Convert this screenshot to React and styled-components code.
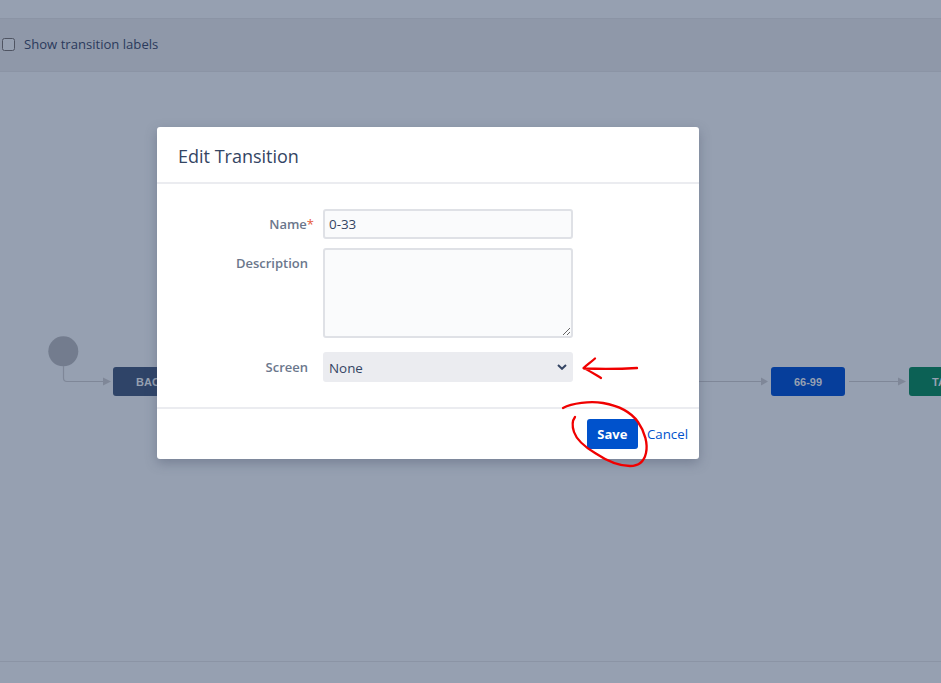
import React from "react";
import styled, { createGlobalStyle } from "styled-components";

const Global = createGlobalStyle`
  html, body { margin: 0; padding: 0; }
  body { font-family: "Open Sans", "Noto Sans", "Liberation Sans", sans-serif; background: #96a0b1; }
  * { box-sizing: border-box; }
`;

const Page = styled.div`
  position: relative;
  width: 941px;
  height: 683px;
  overflow: hidden;
  display: flex;
  flex-direction: column;
  background: #96a0b1;
`;
const TopStrip = styled.div`
  height: 19px;
  flex: none;
  border-bottom: 1px solid #8b94a5;
`;
const Toolbar = styled.label`
  height: 53px;
  flex: none;
  display: flex;
  align-items: center;
  gap: 9px;
  padding: 0 0 2px 2px;
  background: #8f98a9;
  border-bottom: 1px solid #8b94a5;
  font-size: 13.1px;
  color: #2b3a5c;
`;
const Check = styled.input`
  appearance: none;
  width: 13px;
  height: 13px;
  margin: 0;
  background: #96a0b1;
  border: 1px solid #4f5462;
  border-radius: 2.5px;
`;
const Canvas = styled.div`
  position: relative;
  flex: 1;
`;
const Footer = styled.div`
  height: 22px;
  flex: none;
  border-top: 1px solid #8b94a5;
`;
const Diagram = styled.svg`
  position: absolute;
  left: 0;
  top: 0;
`;
const Node = styled.div`
  position: absolute;
  top: 295px;
  height: 29px;
  left: ${(p) => p.$x}px;
  width: ${(p) => p.$w}px;
  background: ${(p) => p.$bg};
  border-radius: 3px;
  display: flex;
  align-items: center;
  justify-content: center;
  white-space: nowrap;
  font-family: "Liberation Sans", Arial, sans-serif;
  font-weight: 700;
  font-size: 11px;
  color: #96a0b1;
`;
const Dialog = styled.div`
  position: absolute;
  left: 157px;
  top: 127px;
  width: 542px;
  height: 332px;
  background: #fff;
  border-radius: 3px;
  box-shadow: 0 4px 12px rgba(60, 70, 95, 0.35);
  display: flex;
  flex-direction: column;
`;
const Header = styled.header`
  height: 57px;
  flex: none;
  display: flex;
  align-items: center;
  padding: 2px 21px 0;
  border-bottom: 2px solid #ebecf0;
`;
const Title = styled.h2`
  margin: 0;
  font-size: 18px;
  font-weight: 400;
  color: #344563;
`;
const Body = styled.div`
  flex: 1;
  display: grid;
  grid-template-columns: 151px 250px;
  column-gap: 15px;
  align-content: start;
  padding-top: 25px;
  row-gap: 9px;
`;
const Label = styled.label`
  text-align: right;
  font-size: 13px;
  font-weight: 600;
  color: #6b778c;
  line-height: 30px;
  height: 30px;
  margin-top: ${(p) => p.$mt || 0}px;
`;
const Star = styled.span`
  display: inline-block;
  margin-right: -6px;
  font-weight: 400;
  color: #e5573a;
`;
const fieldBase = `
  display: block;
  width: 250px;
  border: 2px solid #dfe1e6;
  border-radius: 3px;
  background: #fafbfc;
  font-family: inherit;
  font-size: 13.4px;
  color: #344563;
  margin: 0;
  outline: none;
`;
const TextInput = styled.input`
  ${fieldBase}
  height: 30px;
  padding: 0 4px;
`;
const TextArea = styled.textarea`
  ${fieldBase}
  height: 90px;
  padding: 4px;
  resize: both;
`;
const SelectWrap = styled.div`
  position: relative;
  width: 250px;
  height: 30px;
  margin-top: 5px;
`;
const Select = styled.select`
  ${fieldBase}
  appearance: none;
  height: 30px;
  padding: 2px 4px 0;
  border-color: #ebecf0;
  background: #ebecf0;
`;
const Chevron = styled.svg`
  position: absolute;
  right: 6px;
  top: 12px;
  pointer-events: none;
`;
const DialogFooter = styled.footer`
  height: 52px;
  flex: none;
  display: flex;
  align-items: center;
  justify-content: flex-end;
  gap: 9px;
  padding-right: 11px;
  border-top: 2px solid #ebecf0;
`;
const SaveButton = styled.button`
  width: 51px;
  height: 30px;
  border: 0;
  border-radius: 3px;
  background: #0052cc;
  color: #fff;
  font-family: inherit;
  font-weight: 700;
  font-size: 13px;
  padding: 0;
`;
const CancelLink = styled.a`
  color: #0052cc;
  font-size: 13.3px;
  text-decoration: none;
`;
const Ink = styled.svg`
  position: absolute;
  left: 0;
  top: 0;
  pointer-events: none;
`;

export default function App() {
  return (
    <Page>
      <Global />
      <TopStrip />
      <Toolbar>
        <Check type="checkbox" />
        Show transition labels
      </Toolbar>
      <Canvas>
        <Diagram width="941" height="590" viewBox="0 72 941 590">
          <circle cx="63.300" cy="351.300" r="15" fill="#737c8e" />
          <g fill="none" stroke="#7f8798" strokeWidth="1.2">
            <path d="M63.500 366V378Q63.500 381.500 67 381.500H104" />
            <path d="M699 381.500H762" />
            <path d="M849 381.500H900" />
          </g>
          <g fill="#7f8798">
            <path d="M103 377.500L111 381.500L103 385.500Z" />
            <path d="M761 377.500L768 381.500L761 385.500Z" />
            <path d="M898 377.500L906 381.500L898 385.500Z" />
          </g>
        </Diagram>
        <Node $x={113} $w={70} $bg="#2f4468">
          BAC
        </Node>
        <Node $x={771} $w={74} $bg="#063e9b">
          66-99
        </Node>
        <Node $x={909} $w={60} $bg="#0c6155">
          TA
        </Node>
      </Canvas>
      <Footer />
      <Dialog role="dialog">
        <Header>
          <Title>Edit Transition</Title>
        </Header>
        <Body>
          <Label>
            Name<Star>*</Star>
          </Label>
          <TextInput defaultValue="0-33" />
          <Label>Description</Label>
          <TextArea />
          <Label $mt={5}>Screen</Label>
          <SelectWrap>
            <Select defaultValue="None">
              <option>None</option>
            </Select>
            <Chevron width="10" height="6" viewBox="0 0 10 6">
              <path d="M1 1L5 4.800L9 1" fill="none" stroke="#344563" strokeWidth="2" />
            </Chevron>
          </SelectWrap>
        </Body>
        <DialogFooter>
          <SaveButton>Save</SaveButton>
          <CancelLink href="#">Cancel</CancelLink>
        </DialogFooter>
      </Dialog>
      <Ink width="941" height="683" viewBox="0 0 941 683">
        <g fill="none" stroke="#f00000" strokeWidth="2.300" strokeLinecap="round" strokeLinejoin="round">
          <path d="M637 368C620 369 600 369 584 368.500M595 358.500C591 362 587 365 583.500 368C590 371 596 375 601 378" />
          <path d="M563 408C572 403 590 401 603 403C620 406 631 412 638 422C645 432 648 444 646 453C644 462 638 466 630 466C618 466 604 459 595 453C585 447 577 441 574 432C572 426 572 421 575 417" />
        </g>
      </Ink>
    </Page>
  );
}
